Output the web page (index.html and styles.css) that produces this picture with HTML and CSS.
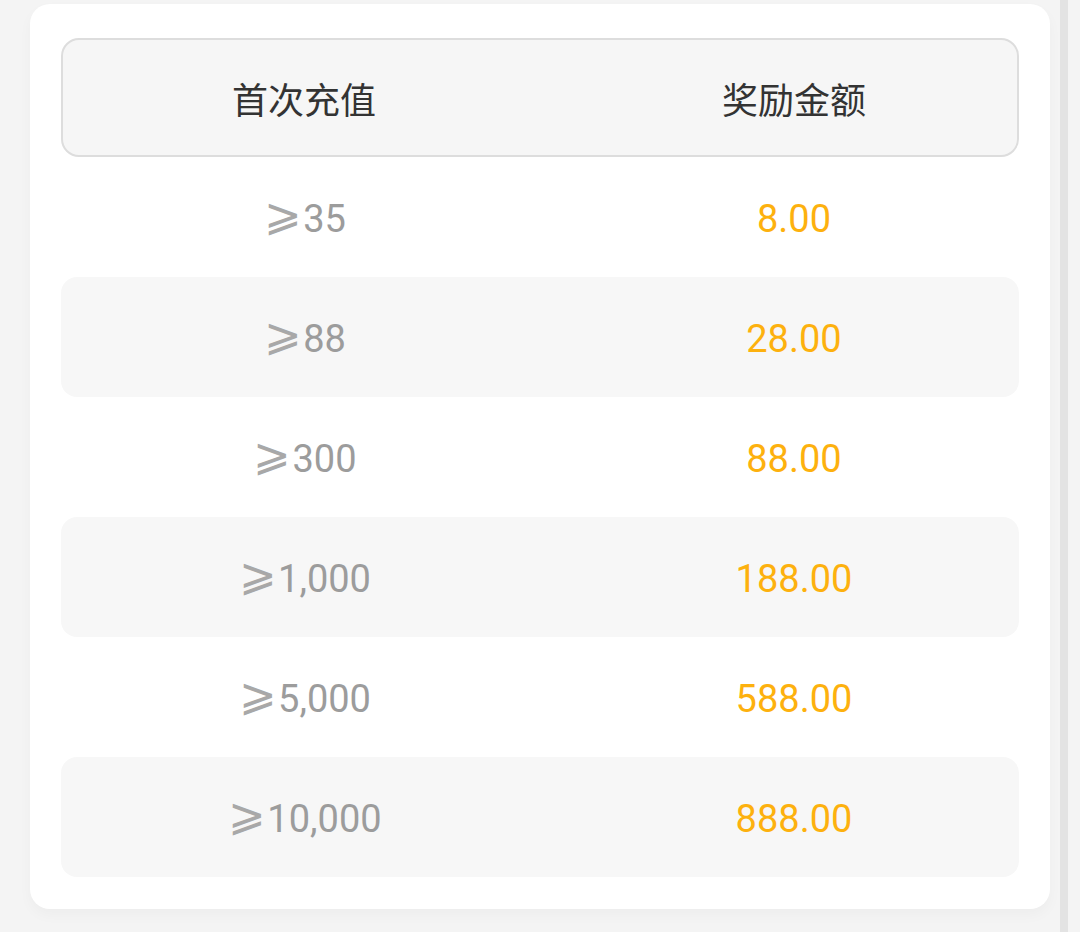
FILE: index.html
```html
<!DOCTYPE html>
<html lang="zh-CN">
<head>
<meta charset="utf-8">
<title>首充奖励</title>
<link rel="stylesheet" href="styles.css">
</head>
<body>
<div class="page">
  <main class="card">
    <div class="table">
      <div class="row head">
        <div class="cell">首次充值</div>
        <div class="cell">奖励金额</div>
      </div>
      <div class="row">
        <div class="cell min"><span class="ge">⩾</span>35</div>
        <div class="cell amt">8.00</div>
      </div>
      <div class="row alt">
        <div class="cell min"><span class="ge">⩾</span>88</div>
        <div class="cell amt">28.00</div>
      </div>
      <div class="row">
        <div class="cell min"><span class="ge">⩾</span>300</div>
        <div class="cell amt">88.00</div>
      </div>
      <div class="row alt">
        <div class="cell min"><span class="ge">⩾</span>1,000</div>
        <div class="cell amt">188.00</div>
      </div>
      <div class="row">
        <div class="cell min"><span class="ge">⩾</span>5,000</div>
        <div class="cell amt">588.00</div>
      </div>
      <div class="row alt">
        <div class="cell min"><span class="ge">⩾</span>10,000</div>
        <div class="cell amt">888.00</div>
      </div>
    </div>
  </main>
  <div class="scrollbar"></div>
</div>
</body>
</html>
```

FILE: styles.css
```css
* { box-sizing: border-box; }
html, body {
  margin: 0;
  padding: 0;
  background: #f4f4f4;
  height: 932px;
  overflow: hidden;
}
body {
  font-family: Roboto, "Noto Sans CJK SC", sans-serif;
}
.page {
  display: flex;
  align-items: flex-start;
  height: 932px;
  padding-left: 30px;
}
.card {
  width: 1020px;
  margin-top: 4px;
  background: #ffffff;
  border-radius: 20px;
  padding: 34px 31px 32px 31px;
  box-shadow: 0 6px 14px rgba(0, 0, 0, 0.03);
}
.scrollbar {
  width: 8px;
  height: 932px;
  margin-left: 10px;
  background: #e3e3e3;
}
.table {
  display: flex;
  flex-direction: column;
}
.row {
  display: grid;
  grid-template-columns: 488px 1fr;
  height: 120px;
  align-items: center;
  border-radius: 16px;
}
.row.head {
  height: 119px;
  background: #f6f6f6;
  border: 2px solid #dddddd;
  border-radius: 18px;
  color: #333333;
  font-family: "Noto Sans CJK SC", sans-serif;
  font-size: 36px;
}
.row.head .cell:first-child { padding-right: 6px; }
.row.alt {
  background: #f7f7f7;
}
.cell {
  text-align: center;
  line-height: 1;
  padding-top: 4px;
}
.row.head .cell { padding-top: 0; }
.cell:nth-child(2) {
  padding-left: 20px;
}
.row.head .cell:nth-child(2) {
  padding-left: 20px;
}
.min {
  color: #9c9c9c;
  font-size: 38px;
}
.ge {
  font-size: 45px;
  line-height: 0;
  vertical-align: 2px;
  color: #a8a8a8;
  margin-right: 1px;
}
.amt {
  color: #fdb10e;
  font-size: 38px;
}
```
